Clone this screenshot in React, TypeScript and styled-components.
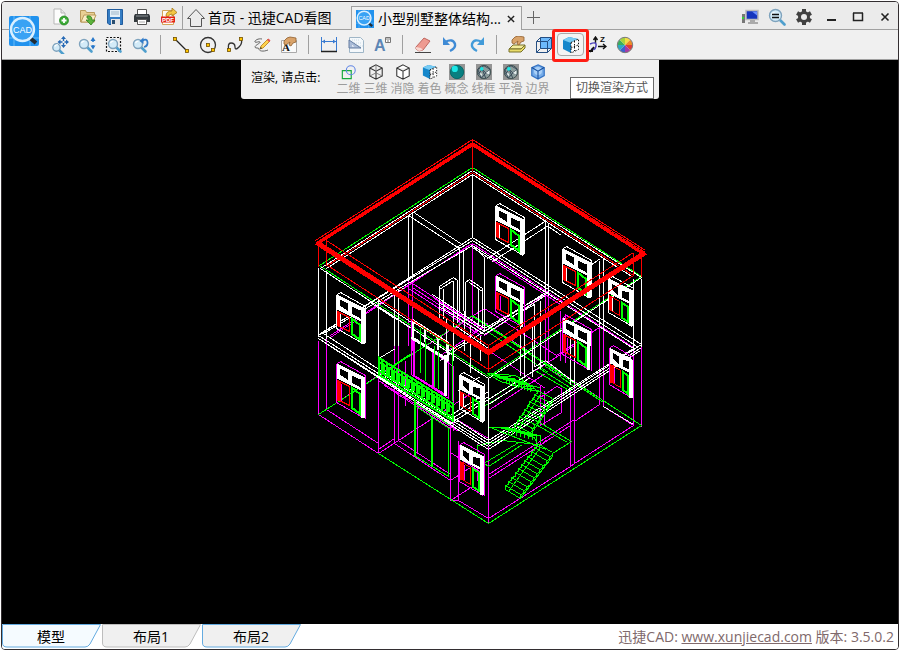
import React from "react";
import styled, { createGlobalStyle, css } from "styled-components";

const GlobalStyle = createGlobalStyle`
  * { box-sizing: border-box; }
  html, body, #root { height: 100%; margin: 0; }
  body { background: #fff; font-family: "Open Sans", "Noto Sans CJK SC", sans-serif; }
  button { font-family: inherit; padding: 0; border: 0; background: none; color: inherit; }
`;

const AppWindow = styled.div`
  display: flex;
  flex-direction: column;
  height: 100vh;
  padding: 1px 1px 0;
  background: #fff;
`;
const Frame = styled.div`
  display: flex;
  flex: 1;
  flex-direction: column;
  min-height: 0;
  border: 1px solid #332e31;
  border-radius: 4px;
  overflow: hidden;
`;
const Header = styled.header`
  display: grid;
  grid-template-columns: 45px 1fr;
  grid-template-rows: 28px 30px;
  flex: none;
`;
const TitleBar = styled.div`
  grid-area: 1 / 1 / 2 / 3;
  display: flex;
  align-items: stretch;
  padding-left: 45px;
  background: #ebebeb;
  border-bottom: 1px solid #a0a0a0;
`;
const ToolBar = styled.div`
  grid-area: 2 / 1 / 3 / 3;
  display: flex;
  align-items: stretch;
  padding-left: 44px;
  background: #f0f0f0;
  border-bottom: 1px solid #a0a0a0;
`;
const LogoCell = styled.div`
  grid-area: 1 / 1 / 3 / 2;
  z-index: 1;
  display: flex;
  align-items: center;
  padding-left: 7px;
`;
const ToolButton = styled.button<{ $boxed?: boolean }>`
  position: relative;
  width: 27px;
  display: flex;
  flex: none;
  align-items: center;
  justify-content: center;
  ${(p) =>
    p.$boxed &&
    css`
      z-index: 3;
      &::before {
        content: "";
        position: absolute;
        inset: 3px 0;
        border: 1px solid #a9a9a9;
        border-radius: 4px;
        background: #f4f4f4;
      }
      &::after {
        content: "";
        position: absolute;
        inset: -1px -5px -3px;
        border: 3px solid #ff1e14;
        border-radius: 3px;
      }
      svg { position: relative; }
    `}
`;
const Divider = styled.span<{ $tall?: boolean }>`
  flex: none;
  width: 1px;
  margin: ${(p) => (p.$tall ? "4px 0 0" : "5px 6px")};
  background: #a0a0a0;
`;
const FileTools = styled.div`
  display: flex;
  padding-top: 3px;
`;
const HomeTab = styled.button`
  display: flex;
  align-items: center;
  gap: 2px;
  width: 168px;
  padding: 4px 0 0 3px;
  font-size: 14px;
  line-height: 20px;
  color: #000;
  white-space: nowrap;
`;
const FileTab = styled.div`
  display: flex;
  align-items: center;
  width: 171px;
  margin: 4px 0 -1px;
  padding-left: 4px;
  background: #f0f0f0;
  border: 1px solid #a0a0a0;
  border-bottom: 0;
`;
const FileTabName = styled.button`
  display: flex;
  align-items: center;
  gap: 4px;
  flex: 1;
  font-size: 14px;
  line-height: 20px;
  color: #000;
  white-space: nowrap;
`;
const SmallButton = styled.button`
  width: 22px;
  display: flex;
  align-items: center;
  justify-content: center;
`;
const AddButton = styled(SmallButton)`
  padding-top: 3px;
`;
const TitleActions = styled.div`
  display: flex;
  margin-left: auto;
  padding-top: 2px;
`;
const Canvas = styled.main`
  position: relative;
  flex: 1;
  min-height: 0;
  background: #000;
`;
const Drawing = styled.svg`
  display: block;
  width: 100%;
  height: 100%;
`;
const RenderPanel = styled.div`
  position: absolute;
  top: 0;
  left: 239px;
  width: 418px;
  height: 39px;
  padding: 0 5px 0 10px;
  display: flex;
  align-items: center;
  background: #f0f0f0;
  border-radius: 0 0 3px 3px;
`;
const PanelTitle = styled.span`
  width: 84px;
  padding-bottom: 4px;
  font-size: 12px;
  line-height: 18px;
  color: #000;
  white-space: nowrap;
`;
const ModeButton = styled.button`
  width: 27px;
  display: flex;
  flex-direction: column;
  align-items: center;
  padding-top: 2px;
  color: #9c9c9c;
  font-size: 12px;
  line-height: 18px;
  white-space: nowrap;
`;
const Tooltip = styled.span`
  align-self: flex-end;
  margin-left: auto;
  padding: 0 5px;
  border: 1px solid #6b6b6b;
  background: #fff;
  color: #575757;
  font-size: 12px;
  line-height: 20px;
  white-space: nowrap;
`;
const StatusBar = styled.footer`
  display: flex;
  flex: none;
  height: 25px;
  background: #fff;
`;
const LayoutTab = styled.button`
  position: relative;
  width: 100px;
  padding-right: 2px;
  font-size: 14px;
  line-height: 24px;
  color: #000;
  svg { position: absolute; top: 0; left: 0; }
  span { position: relative; }
`;
const Version = styled.p`
  margin: 0 4px 0 auto;
  font-size: 14px;
  line-height: 25px;
  color: #80696b;
  white-space: nowrap;
  a { color: inherit; }
`;

const Icon = ({ size = 18, children }: { size?: number; children: React.ReactNode }) => (
  <svg width={size} height={size} viewBox="0 0 18 18" fill="none" aria-hidden="true">
    {children}
  </svg>
);

const Logo = ({ size, plate }: { size: number; plate?: boolean }) => (
  <svg width={size} height={size} viewBox="0 0 30 30" role="img" aria-label="CAD">
    <rect x="0" y="0" width="30" height="30" rx={plate ? 2 : 0} fill="#2192ee" />
    <path d="M0 22h30M5 0v30M21 0v30" stroke="#66baf8" strokeWidth="1" />
    <path d="M21 22l6 5" stroke="#222c35" strokeWidth="4" />
    <circle cx="13.5" cy="13.5" r="11.5" fill="#39a2f4" stroke="#d9efff" strokeWidth="2.4" />
    <text x="13.5" y="17" textAnchor="middle" fontFamily="Liberation Sans" fontSize="9" fill="#fff">CAD</text>
  </svg>
);

const Lens = ({ x = 7, y = 10, r = 4 }: { x?: number; y?: number; r?: number }) => (
  <>
    <path d={`M${x + r - 1} ${y + r - 1}l4 4`} stroke="#4f9fcd" strokeWidth="2.6" strokeLinecap="round" />
    <circle cx={x} cy={y} r={r} fill="#d3ebf8" stroke="#7fa3bd" strokeWidth="1.4" />
    <path d={`M${x - r + 2} ${y - 1}q1-2 3-2`} stroke="#fff" strokeWidth="1.2" />
  </>
);
const Nodes = ({ points }: { points: number[][] }) => (
  <>
    {points.map(([x, y]) => (
      <rect key={`${x}-${y}`} x={x - 1.5} y={y - 1.5} width="3" height="3" fill="#ffc400" stroke="#705000" strokeWidth=".8" />
    ))}
  </>
);
const NewIcon = () => (
  <Icon>
    <path d="M2 1h7l4 4v11H2z" fill="#fcfcfc" stroke="#b7b7b7" />
    <path d="M9 1v4h4" fill="#e8e8e8" stroke="#b7b7b7" />
    <circle cx="12" cy="12.5" r="4.5" fill="#3aa935" stroke="#21821e" strokeWidth=".7" />
    <path d="M9.5 12.5h5M12 10v5" stroke="#fff" strokeWidth="1.8" />
  </Icon>
);
const OpenIcon = () => (
  <Icon>
    <path d="M1.500 14V2.500h5l1 2h8v9.500z" fill="#e9cf94" stroke="#b99a5c" />
    <path d="M2 14l3-7h12l-3 7z" fill="#faecc4" stroke="#b99a5c" />
    <path d="M8 8q5-1 5 4h3l-4 5-5-5h3q0-2-2-2z" fill="#5cb33c" stroke="#347f22" strokeWidth=".8" />
  </Icon>
);
const SaveIcon = () => (
  <Icon>
    <path d="M1.500 1.500h15v15H3l-1.500-1.500z" fill="#347cc3" stroke="#215c9d" />
    <path d="M4 2h10v7H4z" fill="#e4f0f8" />
    <path d="M5 4h8M5 6h8" stroke="#9fb7c8" />
    <path d="M5 11h9v6H5z" fill="#e7e7e7" />
    <path d="M6 12h3v4H6z" fill="#294f72" />
  </Icon>
);
const PrintIcon = () => (
  <Icon>
    <path d="M4.500 1.500h9V7h-9z" fill="#fff" stroke="#555" />
    <path d="M2 6h14l1 2v6H1V8z" fill="#343a3e" />
    <path d="M3 8h12" stroke="#8b9195" />
    <path d="M4.500 11.500h9v5h-9z" fill="#fff" stroke="#555" />
    <path d="M6 14h6" stroke="#aaa" />
  </Icon>
);
const PdfIcon = () => (
  <Icon>
    <path d="M2.500 2.500h11v14h-11z" fill="#fffaf0" stroke="#d3a458" />
    <path d="M6 8q0-5 6-5V0l5 4.500L12 8V6Q9 6 8 9z" fill="#f3c744" stroke="#a77817" strokeWidth=".8" />
    <path d="M1 8.500h14v6H1z" fill="#e32214" />
    <text x="8" y="13.600" textAnchor="middle" fontFamily="Liberation Sans" fontWeight="700" fontSize="6" fill="#fff">PDF</text>
  </Icon>
);
const MoveIcon = () => (
  <Icon>
    <Lens x={5.5} y={11.5} r={3.7} />
    <path d="M12.500 2v8M8 6h9" stroke="#276ab5" strokeWidth="1.400" />
    <path d="M12.500 0l2.500 3h-5zM12.500 12l2.500-3h-5zM6.500 6l3-2.500v5zM18 6l-3-2.500v5z" fill="#276ab5" />
    <path d="M11.500 5h2v2h-2z" fill="#f0f0f0" />
  </Icon>
);
const ZoomUpIcon = () => (
  <Icon>
    <Lens x={6} y={8} r={4.5} />
    <path d="M15 3v3M15 9v3" stroke="#2878ca" strokeWidth="1.5" />
    <path d="M15 1l2.500 4h-5zM15 13.500l2.500-4h-5z" fill="#2878ca" />
  </Icon>
);
const ZoomBoxIcon = () => (
  <Icon>
    <path d="M1.500 1.500h14v14h-14z" stroke="#111" strokeWidth="1.200" strokeDasharray="2 1.500" />
    <Lens x={8} y={8} r={4.5} />
  </Icon>
);
const ZoomBackIcon = () => (
  <Icon>
    <Lens x={6} y={8} r={4.5} />
    <path d="M10 5q5-3 5.500 1t-3.500 5" stroke="#347dc9" strokeWidth="1.800" />
    <path d="M7.500 5l4-3.500V8z" fill="#347dc9" />
  </Icon>
);
const LineIcon = () => (
  <Icon><path d="M3 3l12 12" stroke="#222" strokeWidth="1.200" /><Nodes points={[[3, 3], [15, 15]]} /></Icon>
);
const CircleIcon = () => (
  <Icon><circle cx="9" cy="9" r="7.500" stroke="#333" strokeWidth="1.300" /><Nodes points={[[9, 9], [14, 14]]} /></Icon>
);
const CurveIcon = () => (
  <Icon><path d="M3 15Q1 7 5 7t4 4 4 0 2-8" stroke="#333" strokeWidth="1.300" /><Nodes points={[[3, 14], [15, 3]]} /></Icon>
);
const PencilIcon = () => (
  <Icon>
    <path d="M9 3C5 2 1 5 2 6s4-1 5 0-5 3-5 5 4 0 4 2 4 3 9 1" stroke="#666" />
    <path d="M7 13l1-3 7-7 2 2-7 7z" fill="#ffd34d" stroke="#b27b16" strokeWidth=".8" />
    <path d="M14 4l1.500-1.500 2 2L16 6z" fill="#e3545a" />
    <path d="M7 13l.7-2 1.500 1.300z" fill="#333" />
  </Icon>
);
const Hand = ({ y = 0 }: { y?: number }) => (
  <path transform={`translate(0 ${y})`} d="M4 5q3-4 6-4l6 1v4l-3 1-2 3-2-1 1-3-4 3-2-1z" fill="#d9a36a" stroke="#90602f" strokeWidth=".8" />
);
const TextEditIcon = () => (
  <Icon>
    <path d="M1.500 4.500h15v12h-15z" fill="#fafafa" stroke="#aaa" />
    <text x="2" y="15" fontFamily="Liberation Serif" fontWeight="700" fontSize="11" fill="#111">A</text>
    <Hand />
  </Icon>
);
const DimensionIcon = () => (
  <Icon>
    <path d="M1.500 1v15M16.500 1v15M2 5.500h14" stroke="#397bd1" />
    <path d="M2 5.500l3-2v4zM16 5.500l-3-2v4z" fill="#397bd1" />
    <path d="M1 15.500h16" stroke="#222" strokeWidth="1.500" />
  </Icon>
);
const AreaIcon = () => (
  <Icon>
    <path d="M2.500 1.500h11l3 3v12h-14z" fill="#f4f8fb" stroke="#9fb6c7" />
    <path d="M5 4h8M5 7h10M9 10h7" stroke="#c9dae6" strokeDasharray="1 1" />
    <path d="M2 4v8h12z" fill="#a9bbd7" stroke="#647da1" />
    <path d="M5 9v1.500h2.500z" fill="#fff" />
  </Icon>
);
const LabelIcon = () => (
  <Icon>
    <text x="0" y="15" fontFamily="Liberation Sans" fontWeight="700" fontSize="16" fill="#5d86b5">A</text>
    <path d="M11.500 1.500h5v5h-5zM11 3h6M13 5h2" fill="#fff" stroke="#777" />
  </Icon>
);
const EraserIcon = () => (
  <Icon>
    <path d="M2 11l8-9 6 3-7 9-4 1-3-2z" fill="#ee9b91" stroke="#bf665f" />
    <path d="M2 11l5 1 2 2-4 1-3-2z" fill="#f8d7d1" />
    <path d="M1 16.500h16" stroke="#444" />
  </Icon>
);
const UndoIcon = () => (
  <Icon><path d="M4 6q8-4 10 2 1 4-5 7" stroke="#3f8bd5" strokeWidth="2.400" /><path d="M2 1v8h7z" fill="#3f8bd5" /></Icon>
);
const RedoIcon = () => (
  <Icon><path d="M14 6Q6 2 4 8q-1 4 5 7" stroke="#429bd9" strokeWidth="2.400" /><path d="M16 1v8H9z" fill="#429bd9" /></Icon>
);
const LayersIcon = () => (
  <Icon>
    <path d="M1 13l4-4h12l-4 4z" fill="#f3ec9c" stroke="#77712b" />
    <path d="M1 13h12l4-4v3l-4 4H1z" fill="#e9dc69" stroke="#77712b" />
    <Hand y={-1} />
  </Icon>
);
const BoxIcon = () => (
  <Icon>
    <path d="M5.500 1.500h11v11h-11z" fill="#6db9fb" />
    <path d="M1.500 5.500h11v11h-11zM1.500 5.500l4-4h11v11l-4 4M12.500 5.500l4-4M5.500 1.500v11h11M5.500 12.500l-4 4" stroke="#254f83" />
  </Icon>
);
const ShadeIcon = ({ size = 18 }: { size?: number }) => (
  <Icon size={size}>
    <path d="M1 4l6-3 9 2-7 4v10l-8-4z" fill="#1687cb" />
    <path d="M1 4l6-3 9 2-7 4z" fill="#76cbf4" />
    <path d="M9 6.500l7.500-3.500v10.500L9 17z" fill="#fff" />
    <path d="M9 6.500l7.500-3.500v10.500L9 17zM12.500 5v10M9 12l7-3" stroke="#111" strokeDasharray="1.500 1.500" />
  </Icon>
);
const AxisIcon = () => (
  <Icon>
    <path d="M6.500 7V2M4.500 4l2-3 2 3M9 10.500h8M14 8l3 2.500-3 2.500" stroke="#111" strokeWidth="1.400" />
    <path d="M1 8q7-3 6 2t-5 3" stroke="#5045bc" strokeWidth="1.500" />
    <path d="M0 15h4M5 11l-4 5" stroke="#111" strokeWidth="1.800" />
    <text x="11" y="6" fontFamily="Liberation Sans" fontWeight="700" fontSize="8" fill="#111">Z</text>
  </Icon>
);
const wheelColors = ["#f4dc46", "#ed8b26", "#df3b39", "#a83aa7", "#3d62cc", "#2caac5", "#3cae5c", "#a4d33d"];
const WheelIcon = () => (
  <Icon>
    {wheelColors.map((color, i) => (
      <path key={color} transform={`rotate(${i * 45} 9 9)`} d="M9 9V1.500A7.500 7.500 0 0 1 14.300 3.700z" fill={color} />
    ))}
    <circle cx="9" cy="9" r="7.700" stroke="#777" />
  </Icon>
);
const MonitorIcon = () => (
  <Icon>
    <path d="M5 2.500h12v9H5z" fill="#1534bd" stroke="#bbb" strokeWidth="1.500" />
    <path d="M11 3.500h5v4z" fill="#6a8fff" />
    <path d="M9 12h5v2h3v2H7v-2h2z" fill="#aaa" />
    <path d="M1 6h3v9H1z" fill="#777" /><path d="M1 9h2v2H1z" fill="#31d535" />
  </Icon>
);
const FindIcon = () => (
  <Icon><Lens x={7.5} y={7.5} r={6} /><path d="M4 6.500h7M4 9.500h7" stroke="#111" strokeWidth="1.500" /></Icon>
);
const GearIcon = () => (
  <Icon>
    {[0, 60, 120].map((a) => <path key={a} d="M9 1v16" transform={`rotate(${a} 9 9)`} stroke="#414141" strokeWidth="4" />)}
    <circle cx="9" cy="9" r="4.500" stroke="#414141" strokeWidth="3" /><circle cx="9" cy="9" r="3" fill="#ebebeb" />
  </Icon>
);
const MinimizeIcon = () => <Icon><path d="M5 12h9" stroke="#222" strokeWidth="2" /></Icon>;
const MaximizeIcon = () => <Icon><path d="M4.500 5v7.500h9V5M4 5h10" stroke="#222" strokeWidth="1.500" /></Icon>;
const CloseIcon = ({ size = 18 }: { size?: number }) => <Icon size={size}><path d="M5.500 5.500l7 7M12.500 5.500l-7 7" stroke="#222" strokeWidth="1.600" /></Icon>;
const HomeIcon = () => (
  <svg width="20" height="20" viewBox="0 0 20 20" fill="none" stroke="#555" aria-hidden="true"><path d="M1.500 10.500L10 1.500l8.500 9h-3v8h-11v-8z" /></svg>
);
const FlatIcon = () => (
  <Icon size={16}><path d="M1.500 7.500h10v9h-10z" stroke="#14a93c" strokeWidth="1.300" /><circle cx="11" cy="7" r="5" stroke="#6186e5" strokeWidth="1.200" /></Icon>
);
const CubeIcon = ({ open }: { open?: boolean }) => (
  <Icon size={16}>
    <path d="M9 1l7 3.500v9L9 17l-7-3.500v-9zM2 4.500L9 8l7-3.500M9 8v9" fill={open ? "#fff" : "none"} stroke="#333" strokeWidth="1.200" />
    {!open && <path d="M9 1v9M2 13.500L9 10l7 3.500" stroke="#777" />}
  </Icon>
);
const SphereIcon = ({ wire }: { wire?: boolean }) => (
  <Icon size={16}>
    <path d="M0 0h18v18H0z" fill="#949494" />
    <circle cx="9" cy="9" r="7.500" fill={wire ? "#8c9c9c" : "#087f80"} stroke={wire ? "#384b4b" : "#066"} />
    {wire && <path d="M2 6l7-4 7 4-5 4-5 6zM2 12l5-6 4 4 5 2M7 6l4 10" stroke="#345" />}
    {wire && <path d="M11 10l4-3v5zM4 10l3 1-1 3z" fill="#e7eeee" />}
    <circle cx="6.500" cy="5.500" r={wire ? 2 : 3.5} fill="#1ce6e5" />
  </Icon>
);
const EdgeIcon = () => (
  <Icon size={16}>
    <path d="M9 1l7 3v9l-7 4-7-4V4z" fill="#76ace9" stroke="#3775c5" strokeWidth="1.400" />
    <circle cx="9" cy="8" r="4.500" fill="#b6d9fb" opacity=".8" />
    <path d="M2 4l7 4 7-4M9 8v9" stroke="#174e9c" strokeWidth="1.200" />
  </Icon>
);

/* Sash window seen along the right-falling axis of the model. */
const Sash = ({ x, y, w = 28, tall = 0, edge, solid }: { x: number; y: number; w?: number; tall?: number; edge?: boolean; solid?: boolean }) => {
  const m = Math.round(w / 2);
  const r = w - 4;
  const glass = m - 1;
  return (
    <g transform={`translate(${x} ${y})`}>
      <path d={`M0 0L${w} ${m}V${m + 15}L0 15z`} fill="#fff" />
      <path d={`M3 5L${glass - 2} 9V16L3 11zM${m + 1} 12L${r} ${m + 2}V${m + 10}L${m + 1} 19z`} fill="#000" />
      <path d={`M0 0V${34 + tall}L${w} ${m + 36 + tall}M1 0L4 -2L${w + 1} ${m - 2}V${m + 34 + tall}`} stroke={edge ? "#f0f" : "#fff"} />
      <path d={`M${w - 2} ${m}V${m + 35 + tall}`} stroke="#fff" strokeWidth={edge && !solid ? 3 : 4} />
      <path d={`M1 17L${glass} 23V${37 + tall}L1 ${31 + tall}z`} stroke="#f00" />
      <path d={`M2 17V${32 + tall}`} stroke="#f00" strokeWidth={solid ? 4 : 2} />
      {!edge && <path d={`M4 19V${32 + tall}`} stroke="#fff" />}
      <path d={`M${m + 1} 24L${r - 1} ${m + 16}V${m + 31 + tall}L${m + 1} ${39 + tall}z`} stroke="#0f0" strokeWidth="2" />
      {edge && <path d={`M${w + 1} ${m}V${m + 36 + tall}M5 20V${32 + tall}M0 18V${34 + tall}`} stroke="#f0f" />}
    </g>
  );
};

const range = (n: number) => Array.from({ length: n }, (_, i) => i);

/* One stair flight: stepped strings on both sides joined by the treads. */
const flightPath = (ax: number, ay: number, bx: number, by: number, dx: number, dy: number, n: number) => {
  let path = "";
  range(n).forEach((i) => {
    const x = Math.round(ax + ((bx - ax) * i) / n);
    const y = Math.round(ay + ((by - ay) * i) / n);
    const nx = Math.round(ax + ((bx - ax) * (i + 1)) / n);
    const ny = Math.round(ay + ((by - ay) * (i + 1)) / n);
    path += `M${x} ${y}V${ny - 1}L${nx} ${ny}M${x + dx} ${y + dy}V${ny + dy - 1}L${nx + dx} ${ny + dy}M${x} ${y}l${dx} ${dy}`;
  });
  return `${path}M${ax + 3} ${ay + 4}L${bx + 3} ${by + 6}M${ax + dx} ${ay + dy + 4}L${bx + dx} ${by + dy + 4}M${bx} ${by}l${dx} ${dy}v4l-${dx} -${dy}z`;
};

const magentaLines = [
  "M318 340V414L378 453M326 338V409L378 443M378 373V453L472 392M394 345V443L450 480M398 340V440L450 474",
  "M450 420V500L472 486M458 440V500L488 518M488 446V523M450 500L458 500M488 518L570 466V386M574 382V463L633 425V350",
  "M641 346V426M599 325V404L574 421M603 328V406L633 425M570 466L574 463M378 449L394 438M326 409L411 353",
  "M472 243L330 335M472 243L633 347M408 280V345M412 283V350M412 283L485 330M408 288L482 336M472 243V320M459 250V325",
  "M405 360V405M417 400V453M450 480L470 467M488 478L570 425M488 474L574 419M488 410L545 373M545 290V366L561 376",
  "M548 292V364L600 398M540 385V425L561 412V388L556 386L540 397M544 390V425M458 420L488 438M484 335L548 292",
  "M411 337L453 366V430M426 345L484 308L556 355M440 355L484 326M454 328L472 315L530 352M412 287L484 334",
  "M477 443V480M484 455V474L450 452M535 370L574 345M472 332L488 322M378 380L458 431M384 385L450 428",
  "M434 298L484 331M468 245L330 337M472 247L560 304M556 355L599 327M488 350L545 388M560 310V360M565 313V362M540 435V445L545 440",
].join("");
const greenLines = [
  "M319 265L472 167L641 276L488 376zM318 414L472 315L641 425L488 523L378 453M472 316L603 402",
  "M488 466L522 444M485 462L520 441M477 458L488 466M539 422L571 441L552 453M537 425L567 442",
  "M485 405L522 383M485 401L520 379M539 368L571 388L552 399M536 371L567 389M488 377V398M391 366L411 353",
  "M487 373L515 375L532 386L537 391L500 381zM488 427L504 427L534 437L537 444L502 440L477 445V458",
  "M484 329L548 372M545 366L574 386",
].join("");
const whiteLines = [
  "M320 268L472 170L641 277L488 378zM326 268L472 174L633 277M318 267V336M326 270V338M472 174V237M641 278V346M633 278V350M488 378V444",
  "M408 214V280M412 211V278M412 211L463 245M408 215L459 248M545 219V292M548 223V295M546 220L487 258M548 225L492 261M472 245L484 257V330M459 246V310M463 249V310",
  "M318 335L472 237L641 344L488 443zM318 338L488 446L641 347M320 333L472 240L638 347M323 333L472 245L633 348L488 440L323 333M321 340L488 449L640 350",
  "M408 278L370 302L394 318M378 298V373M378 300L411 322M378 307L411 328M378 304L404 287M394 290V345M398 288V345",
  "M439 286L453 277L457 280V322M439 286V320M443 288V318M439 289L453 280M453 280V320M465 282L469 279L482 288V327M465 282V315M478 288V325M469 282L482 291M472 247L492 260",
  "M548 226L561 235M545 292L484 331L440 303M545 295L484 334L440 307M548 292L484 328L432 294M590 265L600 258M599 260V325M603 257V328",
  "M534 303V366M540 300V368M520 330V375M524 328V377M534 304L520 312V330M532 376V325M453 320V360M570 330V384M574 326V383",
  "M446 318V352L464 342M464 310V350M470 325V372M480 335V360",
  "M378 371L458 422M378 375L450 423M450 423L488 399L545 363M450 419L488 396M450 415L488 391M535 366L545 360L574 382M603 406L633 424",
  "M456 326L488 348M440 360L500 320M395 348L380 357M458 390L480 376M488 404L530 377",
].join("");

const Villa = () => (
  <Drawing viewBox="2 60 896 564" role="img" aria-label="小型别墅整体结构">
    <g fill="none" strokeWidth="1" shapeRendering="crispEdges" transform="translate(.5 .5)">
      <path d={magentaLines} stroke="#f0f" />
      <path d={greenLines} stroke="#0f0" />
      <path d={whiteLines} stroke="#fff" />

      <path d={flightPath(537, 443, 505, 485, 15, 9, 10)} stroke="#0f0" />
      <path d={flightPath(537, 390, 514, 424, 15, 8, 9)} stroke="#0f0" />
      {range(9).map((i) => (
        <path key={i} d={`M${490 + i * 4} ${373 + i}l10 5l8 1M${490 + i * 5} ${427 + i * 2}l10 4l6 2M${498 + i * 4} ${374 + i * 2}h8M${496 + i * 4} ${427 + i}h12v6M${506 + i * 3} ${376 + i}v7`} stroke="#0f0" />
      ))}

      <path d="M411 320L448 343V398L411 374z" stroke="#f0f" />
      <path d="M412 320V337L447 359V343M424 328V341M437 336V349" stroke="#fff" strokeWidth="2" />
      <path d="M412 320L448 343M411 337L448 360" stroke="#fff" strokeWidth="3" />
      <path d="M413 340V375L444 394M432 352V386" stroke="#f0f" strokeWidth="2" />
      <path d="M420 327V372M425 338V380M434 345V386M438 350V388M412 320L452 347V400" stroke="#0f0" />
      <path d="M445 354V395" stroke="#fff" strokeWidth="3" />

      <Sash x={495} y={205} />
      <Sash x={562} y={248} />
      <Sash x={608} y={278} w={24} />
      <Sash x={495} y={275} tall={2} edge />
      <Sash x={562} y={317} tall={3} edge />
      <Sash x={609} y={347} w={23} tall={3} edge solid />
      <Sash x={336} y={294} />
      <Sash x={336} y={363} tall={5} edge solid />
      <Sash x={459} y={374} w={24} />
      <Sash x={459} y={444} w={24} tall={3} edge solid />

      <path d="M378 357L452 403V420L378 374zM378 361L452 407M378 370L452 417" stroke="#0f0" strokeWidth="2" />
      {range(14).map((i) => (
        <path key={i} d={`M${381 + i * 5} ${360 + i * 3}v${14 - (i % 2)}M${383 + i * 5} ${363 + i * 3}v9`} stroke="#0f0" strokeWidth="2" />
      ))}
      <path d="M414 399V455L448 476V428M414 402L450 425M414 405L450 429" stroke="#0f0" />
      <path d="M414 399V455M431 416V465" stroke="#0f0" strokeWidth="2" />

      <path d="M326 240L488 345L633 252M327 265L472 172L633 275L488 369zM318 243V266M326 240V265M633 252V275M641 255V276M488 345V371M472 145V170" stroke="#f00" />
      <path d="M315 240L472 139L645 250M316 242L472 142L645 252M472 139V146" stroke="#f00" />
      <path d="M317 243L472 144L644 254" stroke="#f00" strokeWidth="3" />
      <path d="M316 242L488 352L645 252" stroke="#f00" strokeWidth="5" />
    </g>
  </Drawing>
);

type Tool = [string, () => React.ReactElement];
const fileTools: Tool[] = [["新建", NewIcon], ["打开", OpenIcon], ["保存", SaveIcon], ["打印", PrintIcon], ["导出PDF", PdfIcon]];
const toolGroups: Tool[][] = [
  [["平移", MoveIcon], ["缩放", ZoomUpIcon], ["窗口缩放", ZoomBoxIcon], ["恢复视图", ZoomBackIcon]],
  [["直线", LineIcon], ["圆", CircleIcon], ["曲线", CurveIcon], ["手绘", PencilIcon], ["文字", TextEditIcon]],
  [["标注", DimensionIcon], ["面积", AreaIcon], ["文本", LabelIcon]],
  [["删除", EraserIcon], ["撤销", UndoIcon], ["重做", RedoIcon]],
  [["图层", LayersIcon], ["视图", BoxIcon], ["切换渲染方式", ShadeIcon], ["坐标", AxisIcon], ["颜色", WheelIcon]],
];
const windowTools: Tool[] = [["显示", MonitorIcon], ["查找", FindIcon], ["设置", GearIcon], ["最小化", MinimizeIcon], ["最大化", MaximizeIcon], ["关闭", CloseIcon]];
const modes: [string, React.ReactElement][] = [
  ["二维", <FlatIcon />], ["三维", <CubeIcon />], ["消隐", <CubeIcon open />], ["着色", <ShadeIcon size={16} />],
  ["概念", <SphereIcon />], ["线框", <SphereIcon wire />], ["平滑", <SphereIcon wire />], ["边界", <EdgeIcon />],
];
const layouts = [
  { name: "模型", fill: "#f5fbff", line: "#64abe0" },
  { name: "布局1", fill: "#f0f0f0", line: "#bdbdbd" },
  { name: "布局2", fill: "#f0f0f0", line: "#64abe0" },
];

const Tools = ({ items }: { items: Tool[] }) => (
  <>
    {items.map(([name, Glyph]) => (
      <ToolButton key={name} aria-label={name} $boxed={name === "切换渲染方式"}><Glyph /></ToolButton>
    ))}
  </>
);

export default function App() {
  return (
    <AppWindow>
      <GlobalStyle />
      <Frame>
        <Header>
          <TitleBar>
            <FileTools><Tools items={fileTools} /></FileTools>
            <Divider $tall />
            <HomeTab><HomeIcon />首页 - 迅捷CAD看图</HomeTab>
            <FileTab>
              <FileTabName><Logo size={18} />小型别墅整体结构...</FileTabName>
              <SmallButton aria-label="关闭标签"><CloseIcon size={16} /></SmallButton>
            </FileTab>
            <AddButton aria-label="新标签"><Icon><path d="M9.500 3v13M3 9.500h13" stroke="#666" /></Icon></AddButton>
            <TitleActions><Tools items={windowTools} /></TitleActions>
          </TitleBar>
          <ToolBar>
            {toolGroups.map((group, i) => (
              <React.Fragment key={i}>
                {i > 0 && <Divider />}
                <Tools items={group} />
              </React.Fragment>
            ))}
          </ToolBar>
          <LogoCell><Logo size={30} plate /></LogoCell>
        </Header>
        <Canvas>
          <Villa />
          <RenderPanel>
            <PanelTitle>渲染, 请点击:</PanelTitle>
            {modes.map(([name, glyph]) => (
              <ModeButton key={name}>{glyph}{name}</ModeButton>
            ))}
            <Tooltip role="tooltip">切换渲染方式</Tooltip>
          </RenderPanel>
        </Canvas>
        <StatusBar>
          {layouts.map(({ name, fill, line }) => (
            <LayoutTab key={name}>
              <svg width="100" height="24" viewBox="0 0 100 24" aria-hidden="true">
                <path d="M.5 .5h98L88 20q-2 3-5 3H5Q.5 23 .5 19z" fill={fill} stroke={line} />
              </svg>
              <span>{name}</span>
            </LayoutTab>
          ))}
          <Version>迅捷CAD: <a href="http://www.xunjiecad.com">www.xunjiecad.com</a> 版本: 3.5.0.2</Version>
        </StatusBar>
      </Frame>
    </AppWindow>
  );
}
